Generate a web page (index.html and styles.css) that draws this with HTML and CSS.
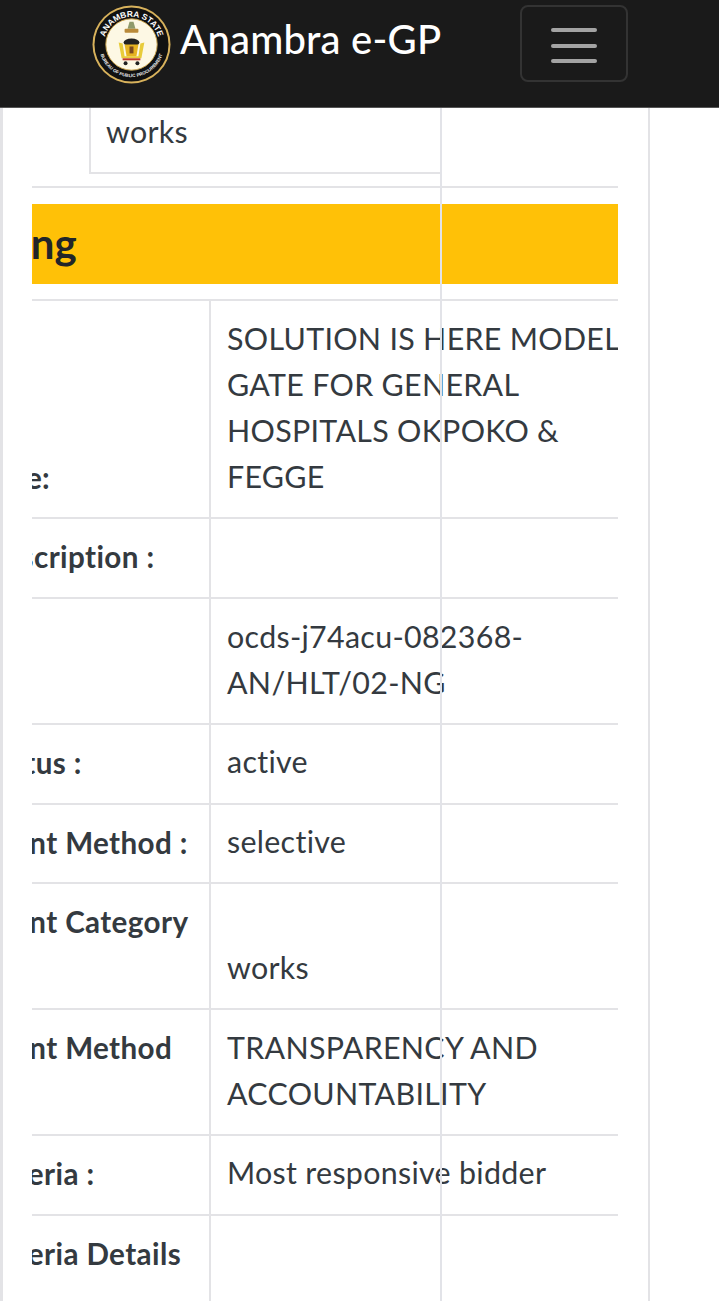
FILE: index.html
```html
<!DOCTYPE html>
<html lang="en">
<head>
  <meta charset="UTF-8">
  <title>Anambra e-GP</title>
  <link rel="stylesheet" href="styles.css">
</head>
<body>

  <header class="navbar">
    <a class="brand">
      <svg class="logo" viewBox="0 0 80 80">
        <defs>
          <path id="arc-top" d="M40 40 m-28 0 a28 28 0 0 1 56 0"/>
          <path id="arc-bottom" d="M40 40 m-33 0 a33 33 0 0 0 66 0"/>
        </defs>
        <circle cx="40" cy="40" r="39.500" fill="#d8b25c"/>
        <circle cx="40" cy="40" r="37.500" fill="#111"/>
        <circle cx="40" cy="40" r="26" fill="#fdf8e4" stroke="#c9a24a"/>
        <text class="logo-top"><textPath href="#arc-top" startOffset="50%" text-anchor="middle">ANAMBRA STATE</textPath></text>
        <text class="logo-bottom"><textPath href="#arc-bottom" startOffset="50%" text-anchor="middle">BUREAU OF PUBLIC PROCUREMENT</textPath></text>
        <path d="M38 17 h4 l2 7 h-8z" fill="#8f9a6a"/>
        <rect x="33" y="24" width="14" height="4" rx="1" fill="#b98a3a"/>
        <ellipse cx="40" cy="38" rx="8" ry="4" fill="#222"/>
        <path d="M27 38 l4 1 2 13 h14 l2-13 4-1 -3 16 h-20z" fill="#e8cc3a"/>
        <path d="M33 40 h14 l-2 12 h-10z" fill="#e6b422"/>
        <path d="M38 42 h4 v7 h-4z" fill="#7a4a20"/>
        <rect x="31" y="54" width="18" height="2" fill="#c0392b"/>
        <circle cx="34" cy="59" r="2" fill="#222"/>
        <circle cx="46" cy="59" r="2" fill="#222"/>
      </svg>
      <span class="brand-name">Anambra e-GP</span>
    </a>
    <button class="toggler">
      <span></span><span></span><span></span>
    </button>
  </header>

  <main class="page">
    <div class="outer-line"></div>
    <div class="scroll">
      <div class="top-row">
        <div class="top-cell">works</div>
      </div>
      <div class="rule"></div>
      <div class="inner">
        <h3 class="band">Tendering</h3>
        <table class="details">
          <tr><th>Tender Title:</th><td class="nowrap">SOLUTION IS HERE MODEL<br>GATE FOR GENERAL<br>HOSPITALS OKPOKO &amp;<br>FEGGE</td></tr>
          <tr><th>Tender Description :</th><td></td></tr>
          <tr><th>OCID :</th><td>ocds-j74acu-082368-<br>AN/HLT/02-NG</td></tr>
          <tr><th>Tender Status :</th><td>active</td></tr>
          <tr><th>Procurement Method :</th><td>selective</td></tr>
          <tr><th>Procurement Category :</th><td>works</td></tr>
          <tr><th>Procurement Method Details :</th><td>TRANSPARENCY AND ACCOUNTABILITY</td></tr>
          <tr><th>Award Criteria :</th><td>Most responsive bidder</td></tr>
          <tr class="last"><th>Award Criteria Details</th><td></td></tr>
        </table>
      </div>
    </div>
  </main>

</body>
</html>
```

FILE: styles.css
```css
* { box-sizing: border-box; }

html, body {
  margin: 0;
  height: 1301px;
  overflow: hidden;
  background: #fff;
  font-family: "Lato", "Open Sans", sans-serif;
  color: #343a40;
}

.navbar {
  height: 108px;
  background: #1a1a1a;
  display: flex;
  align-items: flex-start;
  padding: 4px 0 0 92px;
  border-bottom: 1px solid #555;
}

.brand {
  display: flex;
  align-items: center;
  gap: 9px;
  width: 428px;
  height: 80px;
  color: #fff;
}

.logo { width: 79px; height: 79px; }
.logo-top { font: 900 8.500px "Liberation Sans", sans-serif; fill: #fff; }
.logo-bottom { font: 700 4.600px "Liberation Sans", sans-serif; fill: #eee; }

.brand-name {
  font-size: 40px;
  font-weight: 500;
  letter-spacing: 0.2px;
  position: relative;
  top: -5px;
}

.toggler {
  width: 108px;
  height: 77px;
  margin-top: 1px;
  background: transparent;
  border: 2px solid #333;
  border-radius: 8px;
  display: flex;
  flex-direction: column;
  align-items: center;
  gap: 11.500px;
  padding: 21px 0 0;
}

.toggler span {
  width: 46px;
  height: 4px;
  border-radius: 2px;
  background: #a3a3a3;
}

.page {
  position: relative;
  width: 650px;
  height: 1193px;
  border-left: 3px solid #e3e3e6;
  border-right: 2px solid #e3e3e6;
  padding-left: 29px;
  padding-right: 30px;
}

/* stray border of the outer table, sits above the text */
.outer-line {
  position: absolute;
  left: 437px;
  top: 0;
  bottom: 0;
  width: 2px;
  background: #e2e3e8;
  z-index: 2;
}

.scroll {
  overflow: hidden;
  height: 100%;
}

.top-row {
  height: 66px;
  margin-left: 57px;
  width: 351px;
  border-bottom: 2px solid #e3e3e6;
}

.top-cell {
  height: 64px;
  border-left: 2px solid #e3e3e6;
  padding: 5px 0 0 15px;
  font-size: 30.400px;
  letter-spacing: 0.3px;
  line-height: 36px;
}

.rule {
  height: 2px;
  margin-top: 12px;
  background: #e3e3e6;
}

.inner {
  margin-left: -166px;
  padding-top: 16px;
}

.band {
  margin: 0;
  height: 80px;
  width: 752px;
  padding-left: 26px;
  background: #ffc107;
  color: #212529;
  font-size: 42px;
  font-weight: 700;
  line-height: 78px;
  white-space: nowrap;
}

.details {
  border-collapse: collapse;
  margin-top: 15px;
  width: 752px;
  table-layout: fixed;
  font-size: 30.400px;
  letter-spacing: 0.3px;
  line-height: 46.300px;
}

.details th, .details td {
  border-top: 2px solid #e3e3e6;
  padding: 13.500px 0 17.800px 16px;
  vertical-align: bottom;
  text-align: left;
}

.details th {
  width: 344px;
  padding-top: 15px;
  padding-right: 16px;
  padding-bottom: 16.300px;
  font-size: 29.600px;
  font-weight: 700;
  letter-spacing: 0.4px;
}

.details td {
  border-left: 2px solid #e3e3e6;
  padding-right: 0;
}

.details .nowrap { white-space: nowrap; }

/* the last row runs on past the bottom of the window */
.details .last th { padding-bottom: 60px; }
```
